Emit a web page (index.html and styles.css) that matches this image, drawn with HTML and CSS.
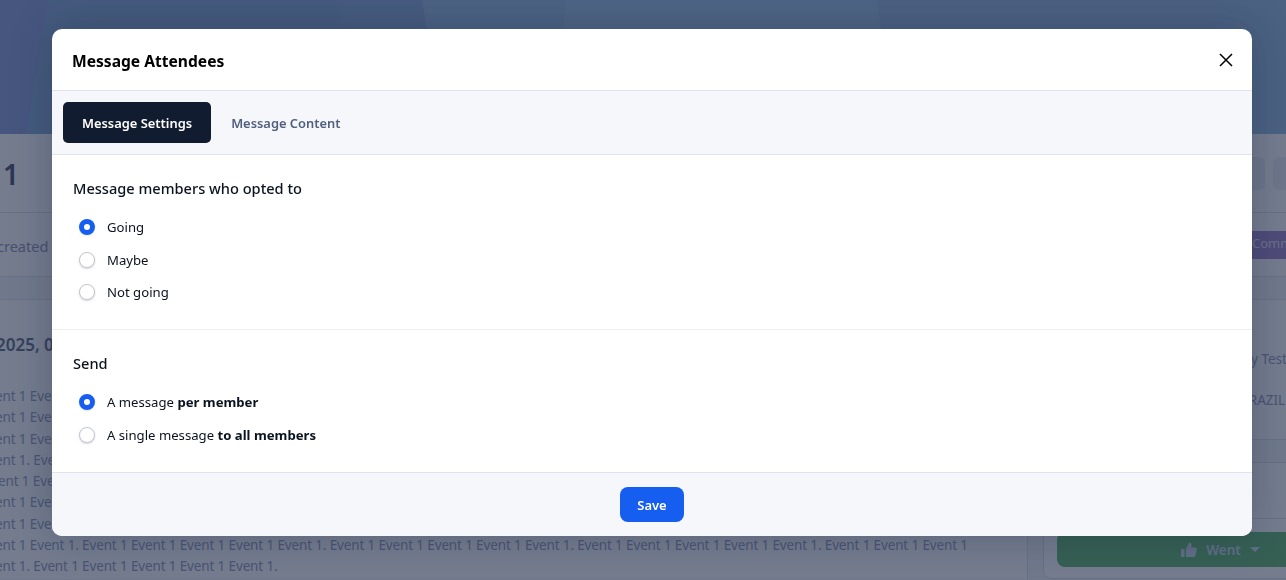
FILE: index.html
```html
<!DOCTYPE html>
<html lang="en">
<head>
<meta charset="utf-8">
<title>Message Attendees</title>
<link rel="stylesheet" href="styles.css">
</head>
<body>
<div class="page">
  <div class="hero">
    <svg class="facets" viewBox="0 0 1286 134" preserveAspectRatio="none" aria-hidden="true">
      <polygon points="0,0 49,0 26,134 0,134" fill="#94a5dc"/>
      <polygon points="49,0 344,0 330,134 26,134" fill="#8fb0d8"/>
      <polygon points="344,0 422,0 444,134 330,134" fill="#92b2da"/>
      <polygon points="422,0 565,0 555,134 444,134" fill="#a0c2e4"/>
      <polygon points="565,0 877,0 898,134 555,134" fill="#a5c8e8"/>
      <polygon points="877,0 1286,0 1286,134 898,134" fill="#9dc0e2"/>
    </svg>
  </div>
  <div class="title-row">
    <h1 class="event-title">1</h1>
    <div class="title-actions"><span class="ghost-btn"></span><span class="ghost-btn"></span></div>
  </div>
  <div class="meta-row">
    <span class="created">created by</span>
    <span class="community">Community</span>
  </div>
  <div class="content">
    <div class="main-card">
      <h2 class="event-date">2025, 09:00</h2>
      <p class="event-text">Event 1 Event 1</p>
      <p class="event-text">Event 1 Event 1</p>
      <p class="event-text">Event 1 Event 1</p>
      <p class="event-text">Event 1. Event 1</p>
      <p class="event-text shift">Event 1 Event 1</p>
      <p class="event-text">Event 1 Event 1</p>
      <p class="event-text">Event 1 Event 1</p>
      <p class="event-text">Event 1 Event 1. Event 1 Event 1 Event 1 Event 1 Event 1. Event 1 Event 1 Event 1 Event 1 Event 1. Event 1 Event 1 Event 1 Event 1 Event 1. Event 1 Event 1 Event 1</p>
      <p class="event-text">Event 1. Event 1 Event 1 Event 1 Event 1 Event 1.</p>
    </div>
    <aside class="side">
      <div class="side-card info">
        <span class="info-line">by Test</span>
        <span class="info-line country">BRAZIL</span>
      </div>
      <div class="side-card rsvp">
        <div class="rsvp-head"></div>
        <div class="went">
          <svg class="thumb" viewBox="0 0 16 16" aria-hidden="true"><path d="M0 7h3.500v8H0zM5 7l3.200-6.500c1.400 0 2.300 1 2.300 2.300V5.500h3.700c1 0 1.800.9 1.600 1.900l-1.300 6.200c-.2.800-.8 1.400-1.600 1.400H5z"/></svg>
          <span>Went</span>
          <span class="caret"></span>
        </div>
      </div>
    </aside>
  </div>
</div>

<div class="overlay">
  <div class="modal" role="dialog" aria-label="Message Attendees">
    <header class="modal-head">
      <h3 class="modal-title">Message Attendees</h3>
      <svg class="close" viewBox="0 0 14 14" aria-hidden="true"><path d="M1 1l12 12M13 1L1 13"/></svg>
    </header>
    <nav class="tabs">
      <span class="tab active">Message Settings</span>
      <span class="tab">Message Content</span>
    </nav>
    <section class="group first">
      <h4 class="group-title">Message members who opted to</h4>
      <div class="options">
        <label class="option"><span class="radio on"></span>Going</label>
        <label class="option"><span class="radio"></span>Maybe</label>
        <label class="option"><span class="radio"></span>Not going</label>
      </div>
    </section>
    <section class="group">
      <h4 class="group-title">Send</h4>
      <div class="options">
        <label class="option"><span class="radio on"></span><span>A message <b>per member</b></span></label>
        <label class="option"><span class="radio"></span><span>A single message <b>to all members</b></span></label>
      </div>
    </section>
    <footer class="modal-foot"><button class="save" type="button">Save</button></footer>
  </div>
</div>
</body>
</html>
```
FILE: styles.css
```css
* { box-sizing: border-box; }
html, body { margin: 0; height: 100%; overflow: hidden; }
body { font-family: "Noto Sans", "Open Sans", sans-serif; background: #f6f7fa; color: #565a78; }

.page { height: 580px; overflow: hidden; }
.hero { height: 134px; position: relative; background: #8fb0d8; }
.facets { display: block; width: 100%; height: 100%; }

.title-row { height: 79px; display: flex; align-items: center; justify-content: space-between; padding-left: 3px; background: #fff; border-bottom: 1px solid #dfe3ea; }
.event-title { margin: 2px 0 0; font-size: 28px; font-weight: 600; }
.title-actions { display: flex; gap: 8px; margin-right: -27px; }
.ghost-btn { width: 40px; height: 33px; border-radius: 6px; background: #eef0f5; }
.meta-row { height: 64px; display: flex; align-items: center; justify-content: space-between; background: #fff; border-bottom: 1px solid #dfe3ea; font-size: 14.5px; color: #9499b5; }
.created { margin: 2px 0 0 -3px; }
.community { flex: none; width: 34px; height: 28px; padding-top: 3px; background: #a88bd0; color: #e4e4ee; white-space: nowrap; overflow: hidden; font-size: 13px; }

.content { display: flex; width: 1400px; padding-top: 22px; }
.main-card { flex: none; width: 1028px; overflow: hidden; background: #fff; padding-top: 30px; border-top: 1px solid #dfe3ea; border-right: 1px solid #dfe3ea; }
.event-date { margin: 0 0 26px -4px; font-size: 17px; font-weight: 600; white-space: nowrap; line-height: 30px; color: #6b7389; }
.event-text { margin: 0 0 0 -19px; font-size: 13.5px; letter-spacing: -0.14px; line-height: 21.3px; white-space: nowrap; color: #9da0bf; }
.shift { margin-left: -16px; }

.side { flex: none; width: 372px; padding-left: 15px; display: flex; flex-direction: column; gap: 22px; }
.side-card { background: #fff; border: 1px solid #dfe3ea; border-radius: 8px; }
.info { height: 141px; padding-top: 49px; display: flex; flex-direction: column; gap: 21px; font-size: 13.5px; color: #9da0bf; }
.info-line { margin-left: 199px; white-space: nowrap; line-height: 20px; }
.country { margin-left: 196px; }
.rsvp { height: 117px; width: 345px; }
.rsvp-head { height: 56px; border-bottom: 1px solid #dfe3ea; }
.went { height: 35px; margin: 13px 0 0 13px; width: 327px; border-radius: 8px; background: #6cbc75; display: flex; align-items: center; justify-content: center; gap: 9px; color: #cfdcec; font-size: 13.5px; font-weight: 600; }
.thumb { width: 16px; height: 16px; fill: #cfdcec; }
.caret { width: 0; height: 0; border: 5px solid transparent; border-top-color: #cfdcec; border-bottom: 0; }

.overlay { position: fixed; inset: 0; background: rgba(15, 30, 60, 0.58); }
.modal { position: absolute; left: 52px; top: 29px; width: 1200px; height: 507px; background: #fff; border-radius: 10px; overflow: hidden; box-shadow: 0 0 40px rgba(15, 25, 50, 0.28); display: flex; flex-direction: column; }
.modal-head { height: 62px; flex: none; display: flex; align-items: center; justify-content: space-between; padding: 0 19px 0 20px; border-bottom: 1px solid #dfe2ef; }
.modal-title { margin: 2px 0 0; font-size: 15.6px; font-weight: 700; color: #000; }
.close { width: 14px; height: 14px; fill: none; stroke: #000; stroke-width: 1.500; }
.tabs { height: 64px; flex: none; display: flex; align-items: center; gap: 1px; padding: 0 11px; background: #f6f7fb; border-bottom: 1px solid #dfe2ef; }
.tab { height: 41px; padding: 0 19px; display: flex; align-items: center; border-radius: 5px; font-size: 12.9px; font-weight: 600; color: #51607e; }
.tab.active { background: #121c30; color: #fff; }
.group { padding: 23px 21px 0; height: 142px; }
.group.first { height: 175px; border-bottom: 1px solid #eceef2; }
.group-title { margin: 0 0 13px; font-size: 14.6px; font-weight: 500; line-height: 20px; color: #0b1220; }
.options { display: flex; flex-direction: column; }
.option { height: 32.500px; display: flex; align-items: center; gap: 12px; padding-left: 6px; font-size: 13.15px; color: #0b1220; }
.option b { font-weight: 700; }
.radio { width: 16px; height: 16px; border-radius: 50%; border: 1px solid #c3c7d2; background: #fff; box-shadow: 0 1px 2px rgba(20, 30, 60, 0.18); flex: none; }
.radio.on { border: 5px solid #155eef; box-shadow: 0 1px 2px rgba(20, 30, 60, 0.12); }
.modal-foot { flex: 1; display: flex; align-items: center; justify-content: center; background: #f6f7fb; border-top: 1px solid #dfe2ef; }
.save { width: 64px; height: 35px; border: 0; border-radius: 8px; background: #155eef; color: #fff; font: 600 13px "Noto Sans", sans-serif; }
```
